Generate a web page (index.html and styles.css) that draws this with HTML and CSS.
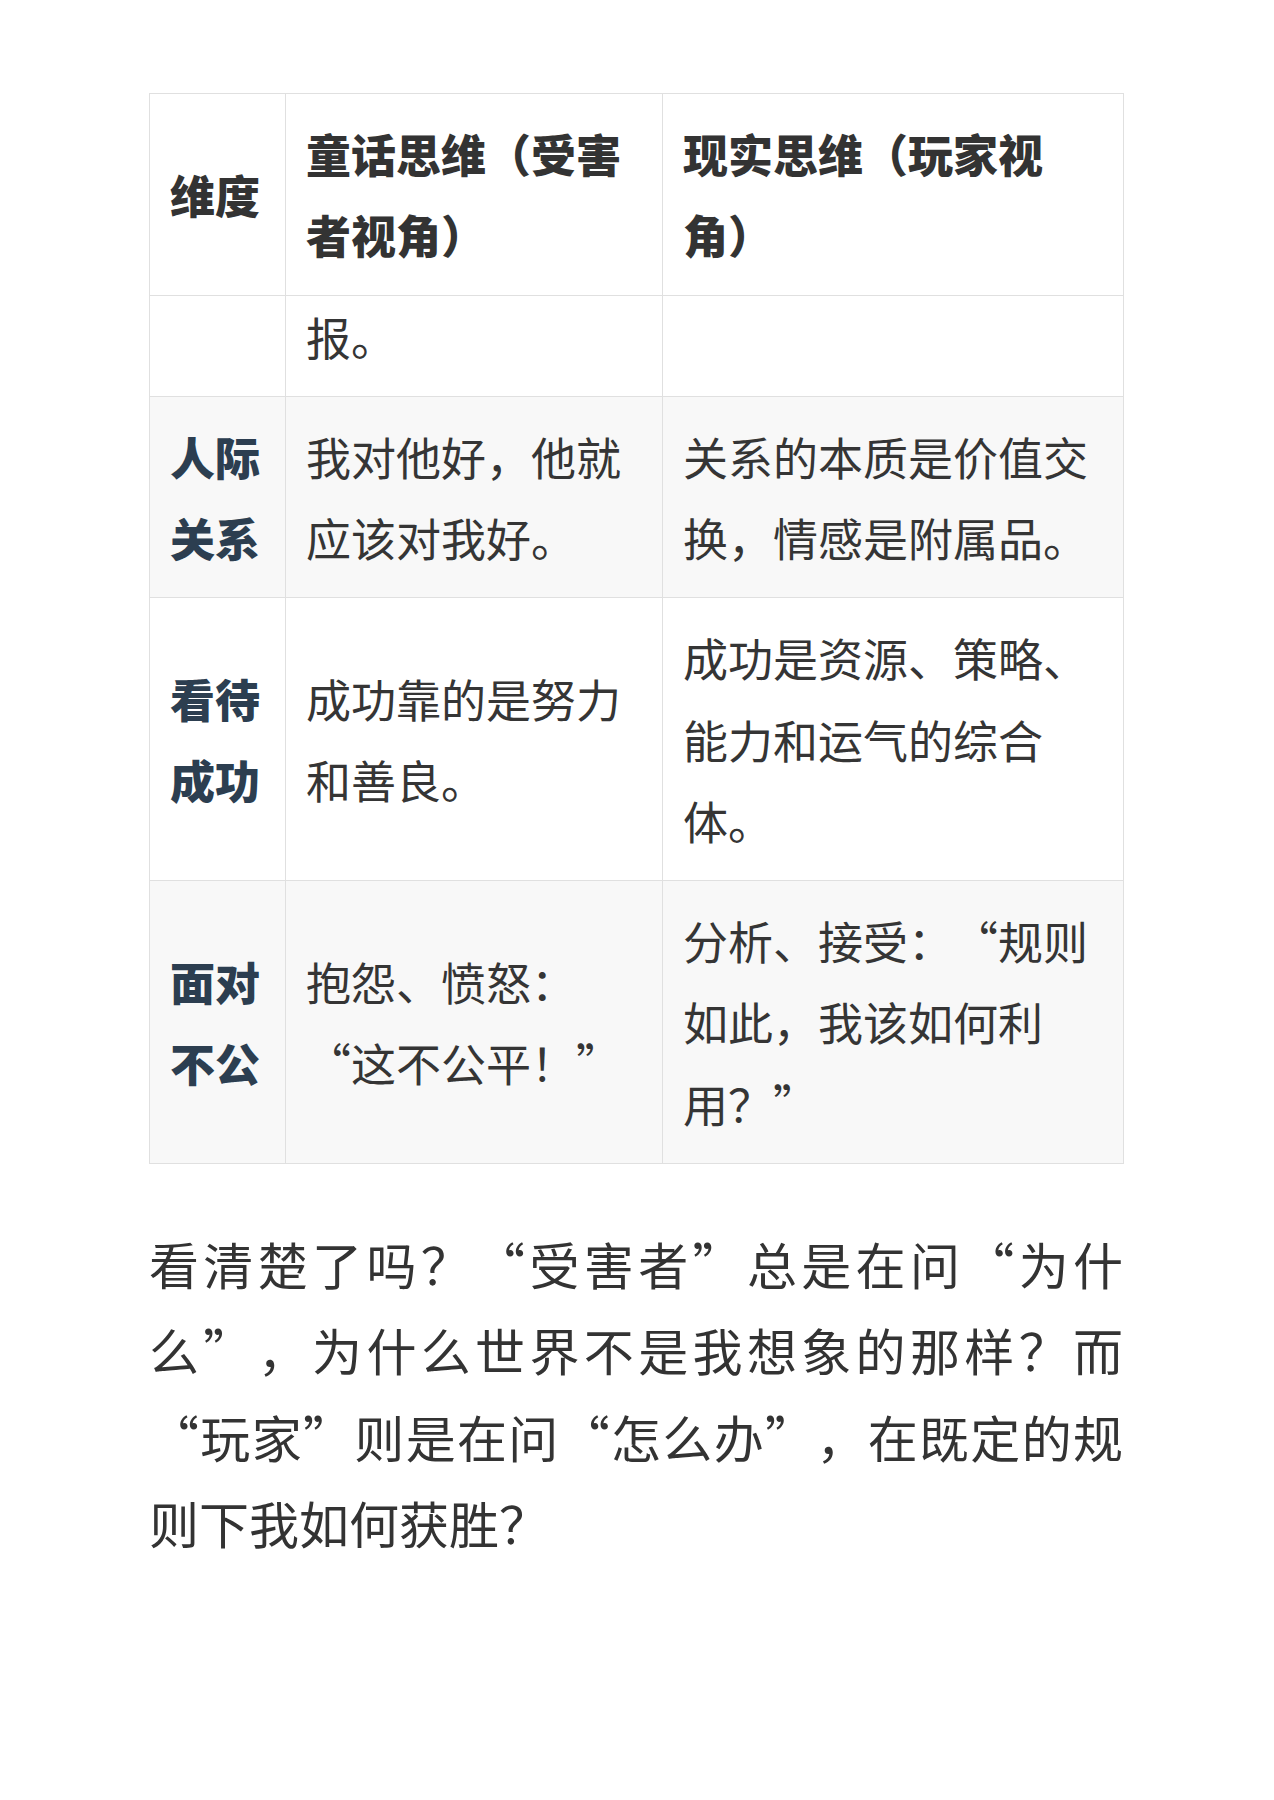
FILE: index.html
```html
<!DOCTYPE html>
<html lang="zh-CN">
<head>
<meta charset="utf-8">
<title>童话思维与现实思维</title>
<link rel="stylesheet" href="styles.css">
</head>
<body>
<main class="page">
  <table class="compare">
    <colgroup>
      <col class="c-dim">
      <col class="c-fairy">
      <col class="c-real">
    </colgroup>
    <thead>
      <tr>
        <th>维度</th>
        <th>童话思维（受害者视角）</th>
        <th>现实思维（玩家视角）</th>
      </tr>
    </thead>
    <tbody>
      <tr class="cont">
        <td class="dim"></td>
        <td>报。</td>
        <td></td>
      </tr>
      <tr>
        <td class="dim">人际关系</td>
        <td>我对他好，他就应该对我好。</td>
        <td>关系的本质是价值交换，情感是附属品。</td>
      </tr>
      <tr>
        <td class="dim">看待成功</td>
        <td>成功靠的是努力和善良。</td>
        <td>成功是资源、策略、能力和运气的综合体。</td>
      </tr>
      <tr>
        <td class="dim">面对不公</td>
        <td>抱怨、愤怒：“这不公平！”</td>
        <td>分析、接受：“规则如此，我该如何利用？”</td>
      </tr>
    </tbody>
  </table>
  <p class="para">看清楚了吗？“受害者”总是在问“为什么”，为什么世界不是我想象的那样？而“玩家”则是在问“怎么办”，在既定的规则下我如何获胜？</p>
</main>
</body>
</html>
```

FILE: styles.css
```css
html, body {
  margin: 0;
  padding: 0;
  background: #ffffff;
}

body {
  font-family: "Noto Sans CJK SC", "Noto Sans", sans-serif;
  color: #333333;
  text-spacing-trim: space-all;
}

.page {
  padding: 93px 151px 200px 149px;
}

.compare {
  width: 974px;
  border-collapse: collapse;
  table-layout: fixed;
  font-size: 45px;
  line-height: 81.25px;
}

.c-dim { width: 136px; }
.c-fairy { width: 377px; }
.c-real { width: 461px; }

.compare th,
.compare td {
  border: 1px solid #e0e0e0;
  padding: 19px 20px;
  vertical-align: middle;
  text-align: left;
}

.compare th {
  font-weight: 900;
  color: #333333;
  background: #ffffff;
}

.compare td {
  color: #353535;
}

.compare td.dim {
  font-weight: 900;
  color: #2c3e50;
}

.compare tbody tr:nth-child(even) td {
  background: #f8f8f8;
}

.compare tr.cont td {
  padding-top: 0;
}

.para {
  margin: 56px 0 0 0;
  font-size: 50px;
  line-height: 86.5px;
  text-align: justify;
  color: #333333;
}
```
